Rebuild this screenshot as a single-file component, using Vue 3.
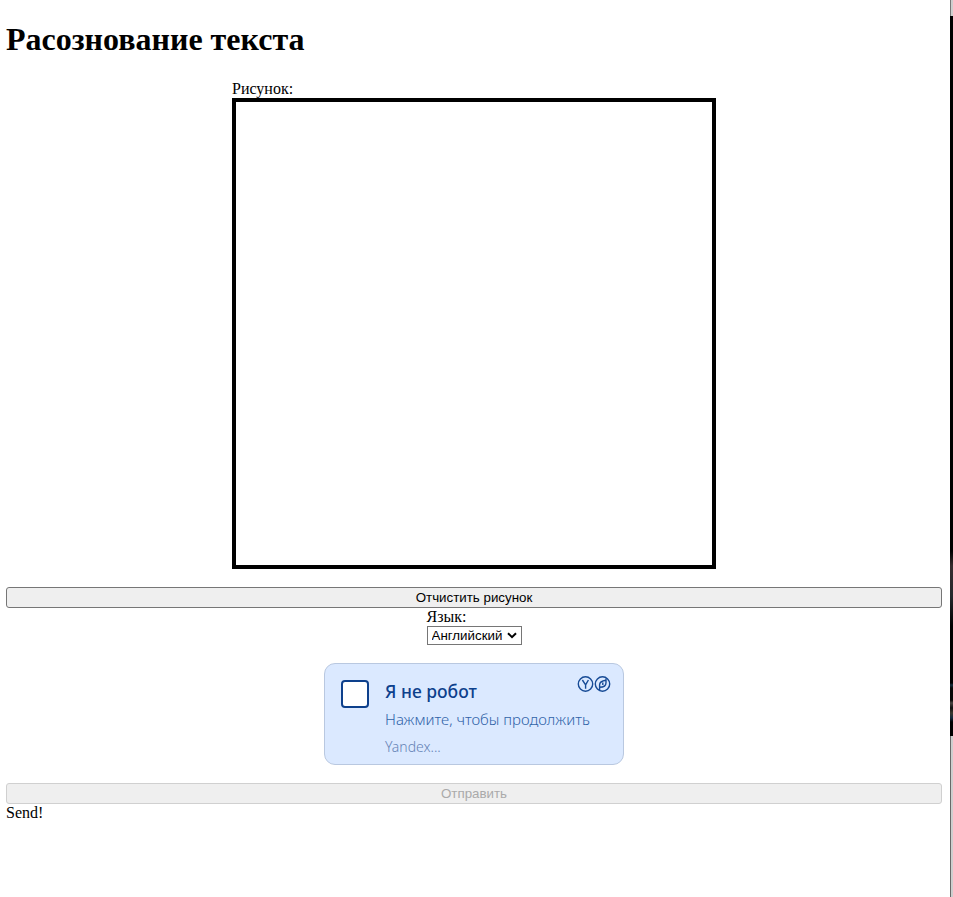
<script setup>
import { ref } from 'vue'

const language = ref('en')
const checked = ref(false)
</script>

<template>
  <div class="screen">
    <main class="page">
      <h1>Расознование текста</h1>
      <section class="drawing">
        <label>Рисунок:</label>
        <canvas class="board" width="476" height="463"></canvas>
      </section>
      <button class="action" type="button">Отчистить рисунок</button>
      <section class="language">
        <label for="lang">Язык:</label>
        <div class="select-wrap">
          <select id="lang" v-model="language">
            <option value="en">Английский</option>
          </select>
          <svg class="chevron" viewBox="0 0 10 7"><path d="M1 1.2 5 5.2 9 1.2" /></svg>
        </div>
      </section>
      <section class="captcha">
        <button class="check" type="button" @click="checked = !checked"></button>
        <div class="captcha-text">
          <strong>Я не робот</strong>
          <span class="hint">Нажмите, чтобы продолжить</span>
          <span class="brand">Yandex...</span>
        </div>
        <svg class="logos" viewBox="0 0 34 16">
          <circle cx="8.5" cy="8" r="7.2" />
          <path d="M5.4 4 8.6 8.9V12.7M11.4 4 8.6 8.9" />
          <circle cx="25.5" cy="8" r="7.2" />
          <path d="M22.6 14.2V8.8C22.6 6.2 25 4.8 29 4.2V6.8C29 9.9 26.8 11.3 22.6 11.3M25.8 9V6.6M29 4.2V2.4" />
        </svg>
      </section>
      <button class="action" type="button" disabled>Отправить</button>
      <p class="status">Send!</p>
    </main>
    <aside class="edge">
      <div class="edge-top"></div>
      <div class="edge-dark"></div>
      <div class="edge-bottom"></div>
    </aside>
  </div>
</template>

<style>
body {
  margin: 0;
  background: #fff;
}
</style>

<style scoped>
.screen {
  display: flex;
  width: 953px;
  height: 897px;
  overflow: hidden;
  color: #000;
  font: 16px/18px "Liberation Serif", "Times New Roman", serif;
}
.page {
  display: flex;
  flex-direction: column;
  box-sizing: border-box;
  width: 950px;
  padding: 21px 8px 0 6px;
}
h1 {
  margin: 0 0 22px;
  font-size: 32px;
  line-height: 37px;
}
.drawing {
  display: flex;
  flex-direction: column;
  align-self: center;
  margin-bottom: 18px;
}
.board {
  display: block;
  border: 4px solid #000;
}
.action {
  height: 21px;
  padding: 0;
  border: 1px solid #767676;
  border-radius: 3px;
  background: #efefef;
  color: #000;
  font: 13.333px/19px "Liberation Sans", Arial, sans-serif;
}
.action:disabled {
  border-color: #d0d0d0;
  color: #aaa;
}
.language {
  display: flex;
  flex-direction: column;
  align-self: center;
  width: 95px;
}
.select-wrap {
  display: grid;
  align-items: center;
}
select {
  grid-area: 1 / 1;
  appearance: none;
  width: 95px;
  height: 19px;
  margin: 0;
  padding: 0 0 0 4px;
  border: 1px solid #767676;
  border-radius: 0;
  background: #fff;
  color: #000;
  font: 13.333px/17px "Liberation Sans", Arial, sans-serif;
}
.chevron {
  grid-area: 1 / 1;
  justify-self: end;
  width: 10px;
  height: 7px;
  margin-right: 5px;
  fill: none;
  stroke: #000;
  stroke-width: 2;
  pointer-events: none;
}
.captcha {
  display: flex;
  align-self: center;
  align-items: flex-start;
  box-sizing: border-box;
  width: 300px;
  height: 102px;
  margin: 18px 0;
  padding: 12px 12px 0 16px;
  border: 1px solid #b9c8e0;
  border-radius: 11px;
  background: #dbe9ff;
  font-family: "Noto Sans", "Open Sans", sans-serif;
}
.check {
  box-sizing: border-box;
  flex: none;
  width: 28px;
  height: 28px;
  margin-top: 4px;
  padding: 0;
  border: 2px solid #0d408c;
  border-radius: 4px;
  background: #fff;
}
.captcha-text {
  display: flex;
  flex-direction: column;
  flex: 1;
  margin-left: 16px;
  white-space: nowrap;
}
.captcha-text strong {
  margin-top: 3px;
  color: #0d408c;
  font-size: 17.5px;
  font-weight: 500;
  line-height: 24px;
}
.hint {
  margin-top: 6px;
  color: #3063a8;
  font-size: 15px;
  font-weight: 300;
  line-height: 20px;
}
.brand {
  margin-top: 10px;
  color: #6583b6;
  font-size: 14px;
  font-weight: 300;
  line-height: 16px;
}
.logos {
  flex: none;
  width: 34px;
  height: 16px;
  margin-left: -40px;
  fill: none;
  stroke: #174b96;
  stroke-width: 1.4;
}
.status {
  margin: 0;
}
.edge {
  display: flex;
  flex-direction: column;
  width: 3px;
}
.edge-top {
  height: 16px;
  background: linear-gradient(90deg, #777 1px, #cecece 1px);
}
.edge-dark {
  height: 720px;
  background: linear-gradient(#000 535px, #362c2e 550px, #25282c 580px, #000 610px, #000 667px, #173040 669px, #080808 672px, #080808 684px, #4a4542 687px, #101010 692px, #3a3a30 697px, #142a3d 702px, #000 706px);
}
.edge-bottom {
  flex: 1;
  background: linear-gradient(90deg, #696969 1px, #cecece 1px);
}
</style>
